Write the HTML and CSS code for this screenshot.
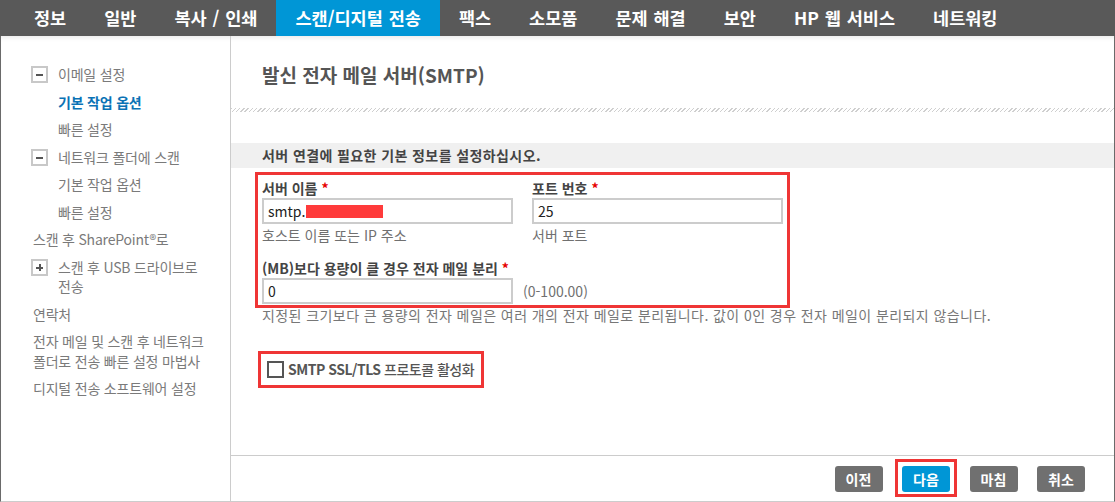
FILE: index.html
```html
<!DOCTYPE html>
<html lang="ko">
<head>
    <meta charset="UTF-8">
    <title>발신 전자 메일 서버(SMTP)</title>
    <link rel="stylesheet" href="styles.css">
</head>
<body>
    <nav class="topnav">
        <a href="#">정보</a>
        <a href="#">일반</a>
        <a href="#">복사 / 인쇄</a>
        <a href="#" class="active">스캔/디지털 전송</a>
        <a href="#">팩스</a>
        <a href="#">소모품</a>
        <a href="#">문제 해결</a>
        <a href="#">보안</a>
        <a href="#">HP 웹 서비스</a>
        <a href="#">네트워킹</a>
    </nav>

    <div class="content">
        <aside class="sidebar">
            <ul>
                <li class="group"><span class="toggle minus"></span><span>이메일 설정</span></li>
                <li class="sub current">기본 작업 옵션</li>
                <li class="sub">빠른 설정</li>
                <li class="group"><span class="toggle minus"></span><span>네트워크 폴더에 스캔</span></li>
                <li class="sub">기본 작업 옵션</li>
                <li class="sub">빠른 설정</li>
                <li class="top">스캔 후 SharePoint®로</li>
                <li class="group"><span class="toggle plus"></span><span>스캔 후 USB 드라이브로 전송</span></li>
                <li class="top">연락처</li>
                <li class="top">전자 메일 및 스캔 후 네트워크 폴더로 전송 빠른 설정 마법사</li>
                <li class="top">디지털 전송 소프트웨어 설정</li>
            </ul>
        </aside>

        <main class="main">
            <div class="main-body">
                <h1 class="page-title">발신 전자 메일 서버(SMTP)</h1>
                <div class="hatch"></div>
                <div class="section-head">서버 연결에 필요한 기본 정보를 설정하십시오.</div>

                <div class="form">
                    <div class="field-row">
                        <div class="field">
                            <label>서버 이름 <span class="req">*</span></label>
                            <div class="text-box">smtp.<span class="redact"></span></div>
                            <div class="hint">호스트 이름 또는 IP 주소</div>
                        </div>
                        <div class="field">
                            <label>포트 번호 <span class="req">*</span></label>
                            <div class="text-box">25</div>
                            <div class="hint">서버 포트</div>
                        </div>
                    </div>

                    <div class="field split">
                        <label>(MB)보다 용량이 클 경우 전자 메일 분리 <span class="req">*</span></label>
                        <div class="inline">
                            <div class="text-box">0</div>
                            <span class="range">(0-100.00)</span>
                        </div>
                    </div>
                    <p class="help">지정된 크기보다 큰 용량의 전자 메일은 여러 개의 전자 메일로 분리됩니다. 값이 0인 경우 전자 메일이 분리되지 않습니다.</p>

                    <div class="check">
                        <span class="check-box"></span>
                        <span><b>SMTP SSL/TLS</b> 프로토콜 활성화</span>
                    </div>
                </div>
            </div>

            <footer class="actions">
                <button class="btn">이전</button>
                <button class="btn primary">다음</button>
                <button class="btn">마침</button>
                <button class="btn">취소</button>
            </footer>
        </main>
    </div>

    <!-- annotation boxes drawn over the page -->
    <div class="mark mark-fields"></div>
    <div class="mark mark-ssl"></div>
    <div class="mark mark-next"></div>
</body>
</html>
```

FILE: styles.css
```css
body {
    margin: 0;
    width: 1115px;
    height: 502px;
    overflow: hidden;
    position: relative;
    background: #fff;
    font-family: "Noto Sans CJK KR", "Noto Sans", sans-serif;
}
.topnav {
    display: flex;
    height: 36px;
    background: #595959;
    padding-left: 15px;
}
.topnav a {
    padding: 0 19px;
    color: #fff;
    font-size: 17.5px;
    font-weight: bold;
    line-height: 36px;
    word-spacing: 1px;
    white-space: nowrap;
    text-decoration: none;
}
.topnav a.active {
    background: #0096d6;
}
.content {
    display: flex;
    height: 466px;
    box-sizing: border-box;
    border-left: 1px solid #6a6a6a;
    border-right: 1px solid #6a6a6a;
    border-bottom: 1px solid #ccc;
    box-shadow: inset 0 5px 4px -3px rgba(0, 0, 0, 0.08);
}
.sidebar {
    width: 230px;
    flex-shrink: 0;
    box-sizing: border-box;
    border-right: 1px solid #ccc;
    padding: 25px 12px 0 0;
}
.sidebar ul {
    list-style: none;
    margin: 0;
    padding: 0;
}
.sidebar li {
    display: flex;
    align-items: flex-start;
    padding: 4px 0;
    font-size: 14px;
    line-height: 19.5px;
    letter-spacing: -0.2px;
    word-break: keep-all;
    color: #7a7a7a;
}
.sidebar li.top {
    padding-left: 32px;
}
.sidebar li.sub {
    padding-left: 57px;
}
.sidebar li.group {
    padding-left: 30px;
}
.sidebar li.current {
    color: #0a72b5;
    font-weight: bold;
}
.toggle {
    position: relative;
    flex-shrink: 0;
    width: 17px;
    height: 17px;
    box-sizing: border-box;
    border: 2px solid #c8c8c8;
    margin: 1px 10px 0 0;
}
.toggle::before,
.toggle.plus::after {
    content: "";
    position: absolute;
    left: 3px;
    top: 6px;
    width: 7px;
    height: 2px;
    background: #555;
}
.toggle.plus::after {
    left: 5.5px;
    top: 3.5px;
    width: 2px;
    height: 7px;
}
.main {
    flex: 1;
    display: flex;
    flex-direction: column;
}
.main-body {
    flex: 1;
    padding-top: 27px;
}
.page-title {
    margin: 0 0 21px 31px;
    font-size: 19px;
    line-height: 24px;
    font-weight: bold;
    color: #555;
}
.hatch {
    height: 4px;
    background: repeating-linear-gradient(135deg, #cfcfcf 0 1px, #fff 1px 3px);
}
.section-head {
    margin-top: 31px;
    padding-left: 31px;
    background: #f0f0f0;
    font-size: 14px;
    font-weight: bold;
    line-height: 25px;
    letter-spacing: 0.4px;
    color: #444;
}
.form {
    padding: 10px 0 0 31px;
}
.field-row {
    display: flex;
    gap: 19px;
}
.field label {
    display: block;
    font-size: 14px;
    font-weight: bold;
    line-height: 20px;
    color: #444;
}
.req {
    color: #e60000;
}
.text-box {
    width: 251px;
    height: 26px;
    box-sizing: border-box;
    border: 2px solid #ccc;
    padding-left: 4px;
    font-size: 14px;
    line-height: 22px;
    color: #222;
}
.redact {
    display: inline-block;
    width: 77px;
    height: 13px;
    margin-left: 1px;
    vertical-align: -1px;
    background: #ff3b3b;
}
.hint {
    margin-top: 1px;
    font-size: 14px;
    line-height: 20px;
    color: #707070;
}
.field.split {
    margin-top: 13px;
}
.inline {
    display: flex;
    align-items: center;
    gap: 10px;
}
.range {
    font-size: 14px;
    color: #707070;
}
.help {
    margin: 1px 0 0;
    font-size: 14px;
    line-height: 20px;
    letter-spacing: 0.42px;
    color: #777;
}
.check {
    display: flex;
    align-items: center;
    gap: 4px;
    margin-top: 34px;
    font-size: 14px;
    font-weight: 500;
    line-height: 20px;
    letter-spacing: -0.5px;
    color: #555;
}
.check b {
    font-weight: bold;
}
.check-box {
    width: 17px;
    height: 17px;
    box-sizing: border-box;
    border: 2px solid #555;
    margin-left: 5px;
}
.actions {
    height: 46px;
    box-sizing: border-box;
    border-top: 1px solid #ccc;
    display: flex;
    justify-content: flex-end;
    align-items: flex-start;
    gap: 19.5px;
    padding: 10px 29px 0 0;
}
.btn {
    width: 48px;
    height: 26px;
    border: none;
    border-radius: 3px;
    background: #707070;
    color: #fff;
    font-family: "Noto Sans CJK KR", sans-serif;
    font-size: 14px;
    font-weight: bold;
    cursor: pointer;
}
.btn.primary {
    background: #0096d6;
}
.mark {
    position: absolute;
    box-sizing: border-box;
    border: 3px solid #ef3535;
    pointer-events: none;
}
.mark-fields {
    left: 255px;
    top: 172px;
    width: 535px;
    height: 136px;
}
.mark-ssl {
    left: 258px;
    top: 351px;
    width: 226px;
    height: 37px;
}
.mark-next {
    left: 895px;
    top: 459px;
    width: 62px;
    height: 38px;
}
```
